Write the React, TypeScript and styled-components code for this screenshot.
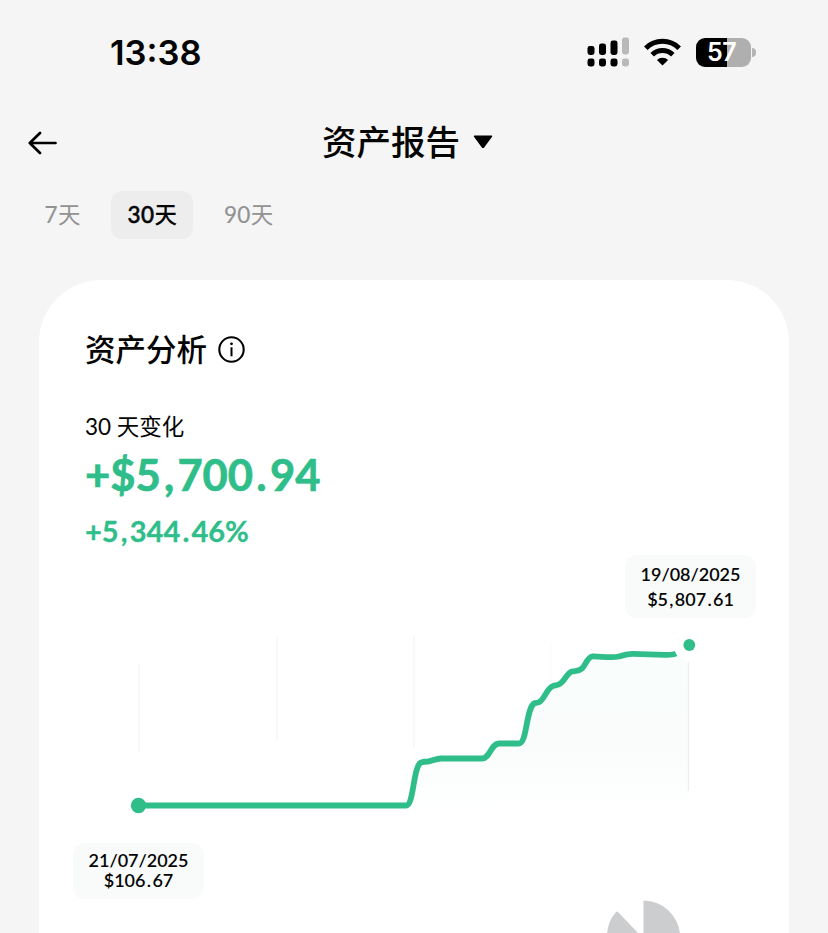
import React from "react";
import styled, { createGlobalStyle } from "styled-components";

const GREEN = "#2fbe8a";

const GlobalStyle = createGlobalStyle`
  *, *::before, *::after { box-sizing: border-box; }
  body { margin: 0; background: #f5f5f5; }
  svg { display: block; }
  button { border: 0; padding: 0; background: none; font: inherit; color: inherit; }
`;

const Screen = styled.main`
  width: 828px;
  height: 933px;
  overflow: hidden;
  display: flex;
  flex-direction: column;
  background: #f5f5f5;
  color: #050505;
  font-family: Lato, "Noto Sans CJK SC", sans-serif;
`;

const StatusBar = styled.div`
  display: flex;
  justify-content: space-between;
  align-items: center;
  flex: none;
  height: 104px;
  padding: 0 72px 0 110px;
`;

const Clock = styled.span`
  font: 600 34.5px/40px Inter, sans-serif;
  margin-top: 2px;
`;

const StatusIcons = styled.div`
  display: flex;
  align-items: center;
  gap: 15px;
`;

const Battery = styled.div`
  display: flex;
  align-items: center;
  gap: 1px;
`;

const BatteryBody = styled.div`
  width: 55px;
  height: 29px;
  padding-right: 4px;
  border-radius: 9px;
  background: linear-gradient(90deg, #000 31px, #afafaf 31px);
  color: #fff;
  font: 600 25px/29px Inter, sans-serif;
  letter-spacing: -0.6px;
  text-align: center;
`;

const BatteryTip = styled.div`
  width: 4px;
  height: 9px;
  border-radius: 0 5px 5px 0;
  background: #b5b5b5;
`;

const Header = styled.header`
  display: grid;
  grid-template-columns: 1fr auto 1fr;
  align-items: center;
  flex: none;
  height: 76px;
  padding: 0 28px;
`;

const BackButton = styled.button`
  width: 30px;
  margin-top: 2px;
`;

const TitleButton = styled.button`
  display: flex;
  align-items: center;
  gap: 13px;
  margin-right: 13px;
  font-size: 34.5px;
  font-weight: 500;
  line-height: 48px;
`;

const Tabs = styled.nav`
  display: flex;
  flex: none;
  gap: 15px;
  padding: 11px 0 0 28.5px;
`;

const Tab = styled.button<{ $active?: boolean }>`
  height: 48px;
  padding: 0 16px;
  border-radius: 11px;
  background: ${(p) => (p.$active ? "#ededed" : "transparent")};
  color: ${(p) => (p.$active ? "#050505" : "#929292")};
  font-size: 22.5px;
  font-weight: ${(p) => (p.$active ? 500 : 400)};
  line-height: 48px;
  white-space: nowrap;
`;

const TabCount = styled.span<{ $active?: boolean }>`
  letter-spacing: 0.4px;
  -webkit-text-stroke: ${(p) => (p.$active ? "0.5px" : "0.2px")} currentColor;
`;

const Card = styled.section`
  display: flex;
  flex-direction: column;
  flex: none;
  width: 750px;
  height: 740px;
  margin: 41px 0 0 39px;
  border-radius: 62px 62px 0 0;
  background: #fff;
`;

const Summary = styled.div`
  display: flex;
  flex-direction: column;
  height: 271px;
  padding: 46px 46px 0;
`;

const CardTitle = styled.h2`
  display: flex;
  align-items: center;
  gap: 11px;
  margin: 0;
  font-size: 30.5px;
  font-weight: 500;
  line-height: 46px;
`;

const ChangeLabel = styled.div`
  margin-top: 38px;
  font-size: 22.5px;
  line-height: 34px;
`;

const ChangeAmount = styled.div`
  margin-top: 3px;
  color: ${GREEN};
  font-size: 43.5px;
  font-weight: 700;
  line-height: 54px;
  -webkit-text-stroke: 0.7px currentColor;
`;

const ChangePercent = styled.div`
  margin-top: 11px;
  color: ${GREEN};
  font-size: 29px;
  font-weight: 700;
  line-height: 38px;
  -webkit-text-stroke: 0.3px currentColor;
`;

const Separator = styled.span`
  padding: 0 0.075em;
`;

const ChartArea = styled.div`
  position: relative;
  height: 383px;
`;

const Callout = styled.div<{ $x: number; $y: number; $height: number; $line: number }>`
  position: absolute;
  left: ${(p) => p.$x}px;
  top: ${(p) => p.$y}px;
  width: 131px;
  height: ${(p) => p.$height}px;
  display: flex;
  flex-direction: column;
  justify-content: center;
  border-radius: 12px;
  background: #f9fbfa;
  font-size: 18px;
  font-weight: 600;
  line-height: ${(p) => p.$line}px;
  letter-spacing: -0.02px;
  text-align: center;
`;

const StartCallout = styled(Callout)`
  padding-bottom: 2px;
`;

// Sets the comma and the point of an amount a little apart from its digits.
function Figure({ value }: { value: string }) {
  return (
    <span>
      {value.split(/([.,])/).map((part, i) =>
        i % 2 ? <Separator key={i}>{part}</Separator> : part
      )}
    </span>
  );
}

function SignalIcon() {
  const bars = [
    { x: 1.5, top: 9, h: 9, c: "#000" },
    { x: 13, top: 6.5, h: 11.5, c: "#000" },
    { x: 24.5, top: 3.5, h: 14.5, c: "#000" },
    { x: 36, top: 0.5, h: 17, c: "#b9b9b9" },
  ];
  return (
    <svg width="43" height="30" viewBox="0 0 43 30">
      {bars.map((b) => (
        <g key={b.x} fill={b.c}>
          <rect x={b.x} y={b.top} width="7" height={b.h} rx="2.4" />
          <rect x={b.x} y="21.5" width="7" height="8" rx="2.4" />
        </g>
      ))}
    </svg>
  );
}

function WifiIcon() {
  return (
    <svg width="37" height="28" viewBox="0 0 37 28" fill="none" stroke="#000" strokeWidth="5">
      <path d="M1.8 10.2a23.8 23.8 0 0 1 33.4 0" />
      <path d="M8.2 16.8a14.7 14.7 0 0 1 20.6 0" />
      <path d="M18.5 27.4l-5.6-5.4a8 8 0 0 1 11.2 0z" fill="#000" stroke="none" />
    </svg>
  );
}

function BackIcon() {
  return (
    <svg width="30" height="24" viewBox="0 0 30 24" fill="none" stroke="#000" strokeWidth="2.7" strokeLinecap="round" strokeLinejoin="round">
      <path d="M27.5 12H1.8M12 2L1.8 12 12 22" />
    </svg>
  );
}

function CaretIcon() {
  return (
    <svg width="20" height="14" viewBox="0 0 20 14">
      <path d="M1.5 1.3h17L10.6 12q-.6.8-1.2 0z" fill="#000" stroke="#000" strokeWidth="1.4" strokeLinejoin="round" />
    </svg>
  );
}

function InfoIcon() {
  return (
    <svg width="27" height="27" viewBox="0 0 27 27" fill="none">
      <circle cx="13.5" cy="13.5" r="12.2" stroke="#000" strokeWidth="2.1" />
      <circle cx="13.5" cy="7.8" r="1.4" fill="#000" />
      <path d="M13.5 11.3v9" stroke="#000" strokeWidth="2" />
    </svg>
  );
}

const LINE =
  "M99 254.500H367C375 254.500 374 215 382 211.500Q385 210.500 389 210.500C394 210 396 207.800 402 207.500H443C451 207.500 452 192.500 460 192.500H480C488 192.500 487 158 495 152.500C497 151.500 499 152.500 501 150.500C506 147 508 137 514 135C517 134 519 135 522 132C527 128 528 122 533 120.500C536 119.500 539 121 543 117.500C547 114 548 106.500 553 105.500C560 105 572 107.500 580 105.500C584 104 588 102.600 594 102.800L626 103.800Q634 104 637 102.500";

// The viewBox matches the chart area, so all plot points are in its pixels.
function BalanceChart() {
  return (
    <svg width="750" height="383" viewBox="0 0 750 383" fill="none">
      <defs>
        <linearGradient id="balance-fill" x1="0" y1="102" x2="0" y2="265" gradientUnits="userSpaceOnUse">
          <stop stopColor="#f9fdfc" />
          <stop offset=".55" stopColor="#f9fcfb" />
          <stop offset="1" stopColor="#fff" />
        </linearGradient>
      </defs>
      <path d={`${LINE}L649 112V265H99Z`} fill="url(#balance-fill)" />
      <g stroke="#f4f4f4" strokeWidth="1.300">
        <path d="M100 113V201M238 86V189M375 85V196" />
        <path d="M512 91V130" stroke="#fbfbfb" />
        <path d="M649.500 111V240" stroke="#eef0ef" />
      </g>
      <path d={LINE} stroke={GREEN} strokeWidth="5.800" strokeLinejoin="round" />
      <circle cx="99.500" cy="254.500" r="7.700" fill={GREEN} />
      <circle cx="650.300" cy="94" r="5.900" fill={GREEN} />
      <path d="M604.500 383V349.500A37 37 0 0 1 641 383Z" fill="#cbcdcf" />
      <path d="M568 383Q569 370 577 361Q578 360 579 361L600 383Z" fill="#cbcdcf" />
    </svg>
  );
}

export default function App() {
  return (
    <Screen>
      <GlobalStyle />
      <StatusBar>
        <Clock>13:38</Clock>
        <StatusIcons>
          <SignalIcon />
          <WifiIcon />
          <Battery>
            <BatteryBody>57</BatteryBody>
            <BatteryTip />
          </Battery>
        </StatusIcons>
      </StatusBar>
      <Header>
        <BackButton aria-label="返回">
          <BackIcon />
        </BackButton>
        <TitleButton>
          资产报告
          <CaretIcon />
        </TitleButton>
      </Header>
      <Tabs>
        <Tab>
          <TabCount>7</TabCount>天
        </Tab>
        <Tab $active>
          <TabCount $active>30</TabCount>天
        </Tab>
        <Tab>
          <TabCount>90</TabCount>天
        </Tab>
      </Tabs>
      <Card>
        <Summary>
          <CardTitle>
            资产分析
            <InfoIcon />
          </CardTitle>
          <ChangeLabel>30 天变化</ChangeLabel>
          <ChangeAmount>
            <Figure value="+$5,700.94" />
          </ChangeAmount>
          <ChangePercent>
            <Figure value="+5,344.46%" />
          </ChangePercent>
        </Summary>
        <ChartArea>
          <BalanceChart />
          <Callout $x={586} $y={4} $height={63} $line={25}>
            <span>19/08/2025</span>
            <Figure value="$5,807.61" />
          </Callout>
          <StartCallout $x={34} $y={292} $height={56} $line={20}>
            <span>21/07/2025</span>
            <Figure value="$106.67" />
          </StartCallout>
        </ChartArea>
      </Card>
    </Screen>
  );
}
